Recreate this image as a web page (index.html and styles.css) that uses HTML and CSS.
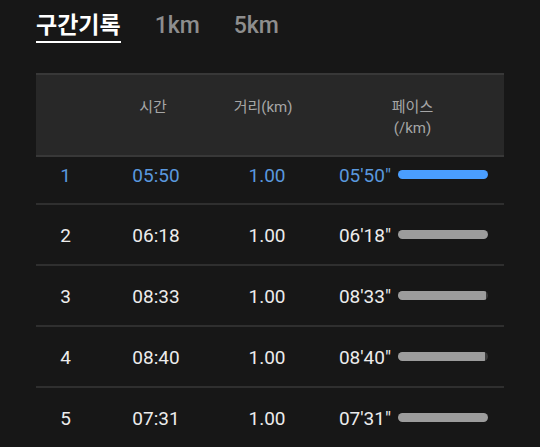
FILE: index.html
```html
<!DOCTYPE html>
<html lang="ko">
<head>
<meta charset="utf-8">
<link rel="stylesheet" href="styles.css">
</head>
<body>
<div class="tabs">
  <div class="tab tab-active">구간기록</div>
  <div class="tab">1km</div>
  <div class="tab">5km</div>
</div>
<div class="table">
  <div class="head">
    <div class="hcell"></div>
    <div class="hcell">시간</div>
    <div class="hcell">거리(km)</div>
    <div class="hcell">페이스<br>(/km)</div>
  </div>
  <div class="row row-first row-active">
    <div class="cell">1</div>
    <div class="cell">05:50</div>
    <div class="cell">1.00</div>
    <div class="cell pace"><span>05'50"</span><div class="track"><div class="fill" style="width:100%"></div></div></div>
  </div>
  <div class="row">
    <div class="cell">2</div>
    <div class="cell">06:18</div>
    <div class="cell">1.00</div>
    <div class="cell pace"><span>06'18"</span><div class="track"><div class="fill" style="width:100%"></div></div></div>
  </div>
  <div class="row">
    <div class="cell">3</div>
    <div class="cell">08:33</div>
    <div class="cell">1.00</div>
    <div class="cell pace"><span>08'33"</span><div class="track"><div class="fill" style="width:97.8%"></div></div></div>
  </div>
  <div class="row">
    <div class="cell">4</div>
    <div class="cell">08:40</div>
    <div class="cell">1.00</div>
    <div class="cell pace"><span>08'40"</span><div class="track"><div class="fill" style="width:97%"></div></div></div>
  </div>
  <div class="row">
    <div class="cell">5</div>
    <div class="cell">07:31</div>
    <div class="cell">1.00</div>
    <div class="cell pace"><span>07'31"</span><div class="track"><div class="fill" style="width:100%"></div></div></div>
  </div>
</div>
</body>
</html>
```
FILE: styles.css
```css
html, body {
  margin: 0;
  padding: 0;
  background: #171717;
  height: 100%;
  overflow: hidden;
}
body {
  font-family: Roboto, "Noto Sans CJK KR", sans-serif;
  color: #ececec;
}
.tabs {
  display: flex;
  gap: 34px;
  padding: 11px 0 0 36px;
}
.tab {
  font-size: 23px;
  line-height: 30px;
  color: #8e8e8e;
  font-weight: 500;
}
.tab-active {
  color: #ffffff;
  font-weight: 700;
  border-bottom: 2px solid #ffffff;
}
.table {
  margin: 30px 36px 0 36px;
}
.head {
  display: grid;
  grid-template-columns: 59px 116px 104px 1fr;
  background: #282828;
  border-top: 2px solid #383838;
  border-bottom: 2px solid #383838;
  padding: 22px 0 16px;
}
.hcell {
  font-size: 15px;
  line-height: 21px;
  color: #a6a6a6;
  text-align: center;
  height: 42px;
}
.hcell:last-child {
  padding-left: 6px;
}
.row {
  display: grid;
  grid-template-columns: 59px 122px 100px 1fr;
  padding: 20px 0 17px;
  border-bottom: 2px solid #2f2f2f;
}
.row-first {
  padding-top: 8px;
  padding-bottom: 16px;
}
.cell {
  font-size: 19px;
  line-height: 22px;
  text-align: center;
  color: #ececec;
}
.row-active .cell {
  color: #5a98de;
}
.pace {
  display: flex;
  justify-content: flex-end;
  align-items: center;
  gap: 7px;
  padding-right: 16px;
}
.track {
  width: 90px;
  height: 9px;
  border-radius: 4.5px;
  background: #3a3a3a;
  overflow: hidden;
  margin-bottom: 4px;
}
.fill {
  height: 100%;
  background: #9c9c9c;
}
.row-active .fill {
  background: #4a9eff;
}
```
